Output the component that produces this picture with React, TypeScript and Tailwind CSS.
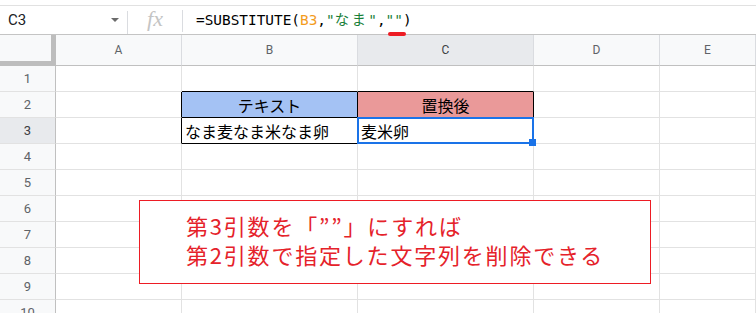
const COLS = ['A', 'B', 'C', 'D', 'E']
const ROWS = [1, 2, 3, 4, 5, 6, 7, 8, 9, 10]

const cells: Record<string, { text: string; bg?: string; center?: boolean }> = {
  B2: { text: 'テキスト', bg: 'bg-[#a4c2f4]', center: true },
  C2: { text: '置換後', bg: 'bg-[#ea9999]', center: true },
  B3: { text: 'なま麦なま米なま卵' },
  C3: { text: '麦米卵' },
}

// cells that draw a black line on their right / bottom edge
const blackRight = ['A2', 'A3', 'B2', 'C2', 'B3', 'C3']
const blackBottom = ['B1', 'C1', 'B2', 'C2', 'B3', 'C3']

function FormulaBar() {
  return (
    <div className="h-[29px] flex items-center border-b border-[#c4c4c4]">
      <div className="w-[127px] h-full flex items-center justify-between pl-2 pr-2">
        <span className="text-[15px] text-[#202124] font-['Roboto',sans-serif]">C3</span>
        <svg width="8" height="4" viewBox="0 0 8 4">
          <polygon points="0,0 8,0 4,4" fill="#6b6b6b" />
        </svg>
      </div>
      <div className="w-px h-[23px] bg-[#dadce0] mt-[4px]" />
      <div className="w-[54px] flex items-center justify-center">
        <span className="text-[22px] italic text-[#c4c4c4] font-['Liberation_Serif',serif] leading-none -mt-[2px]">
          fx
        </span>
      </div>
      <div className="w-px h-[22px] bg-[#dadce0] mt-[2px]" />
      <div className="pl-[13px] text-[14.4px] text-black font-['DejaVu_Sans_Mono','Noto_Sans_CJK_JP',monospace] whitespace-pre">
        =SUBSTITUTE(<span className="text-[#f39c1e]">B3</span>,
        <span className="text-[#188038]">
          "<span className="tracking-[2.4px] font-['Noto_Sans_CJK_JP',sans-serif]">なま</span>"
        </span>
        ,<span className="text-[#188038]">""</span>)
      </div>
    </div>
  )
}

function Sheet() {
  return (
    <div className="grid grid-cols-[56px_126px_176px_176px_126px_96px] grid-rows-[31px_repeat(10,26px)]">
      <div className="bg-[#f8f9fa] border-r-[5px] border-b-[5px] border-[#bdbdbd]" />
      {COLS.map((c) => (
        <div
          key={c}
          className={`flex items-center justify-center text-[12px] font-['Roboto',sans-serif] border-b border-b-[#c0c0c0] border-r border-r-[#dadce0] ${
            c === 'C' ? 'bg-[#e8eaed] text-[#3c4043]' : 'bg-[#f8f9fa] text-[#5f6368]'
          }`}
        >
          {c}
        </div>
      ))}
      {ROWS.map((r) => (
        <Row key={r} r={r} />
      ))}
    </div>
  )
}

function Row({ r }: { r: number }) {
  return (
    <>
      <div
        className={`flex items-center justify-center text-[13px] font-['Roboto',sans-serif] border-r border-r-[#c0c0c0] border-b border-b-[#e2e2e2] ${
          r === 3 ? 'bg-[#e8eaed] text-[#3c4043]' : 'bg-[#f8f9fa] text-[#5f6368]'
        }`}
      >
        {r}
      </div>
      {COLS.map((c) => {
        const id = `${c}${r}`
        const cell = cells[id]
        return (
          <div
            key={id}
            className={`relative flex items-center px-[3px] text-[16px] text-black font-['Noto_Sans_CJK_JP',sans-serif] whitespace-nowrap border-r border-b ${
              blackRight.includes(id) ? 'border-r-black' : 'border-r-[#e2e2e2]'
            } ${blackBottom.includes(id) ? 'border-b-black' : 'border-b-[#e2e2e2]'} ${cell?.bg ?? 'bg-white'} ${
              cell?.center ? 'justify-center' : ''
            } ${id === 'C3' ? 'z-10' : ''}`}
          >
            {cell?.text}
            {id === 'C3' && (
              <div className="absolute -inset-px border-2 border-[#1a73e8]">
                <div className="absolute -right-[4px] -bottom-[4px] w-[7px] h-[7px] bg-[#1a73e8]" />
              </div>
            )}
          </div>
        )
      })}
    </>
  )
}

export default function App() {
  return (
    <div className="relative w-[756px] h-[313px] overflow-hidden bg-white">
      <div className="h-[6px] border-b border-[#e1e1e1]" />
      <FormulaBar />
      <Sheet />

      {/* red marker under the empty string */}
      <div className="absolute left-[388px] top-[32px] w-[18px] h-[4px] rounded-full bg-[#ed1c24]" />

      {/* note box */}
      <div className="absolute left-[139px] top-[200px] w-[512px] h-[84px] border border-[#ed1c24] bg-white pl-[46px] pt-[10px] text-[22px] leading-[29px] tracking-[1.8px] text-[#e5222a] font-['Noto_Sans_CJK_JP',sans-serif]">
        <p>第3引数を「””」にすれば</p>
        <p>第2引数で指定した文字列を削除できる</p>
      </div>
    </div>
  )
}
